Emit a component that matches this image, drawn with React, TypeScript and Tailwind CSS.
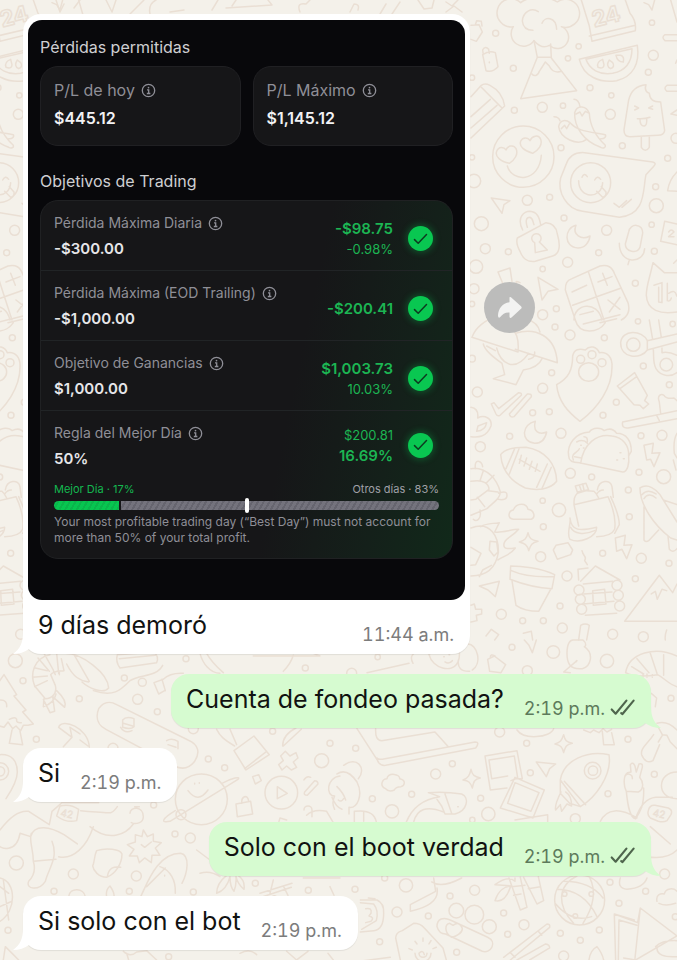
import React from "react";

/* ---------- Chat wallpaper ---------- */

type Dot = [number, number, number];

const dotsA: Dot[] = [
  [107, 100, 9], [160, 205, 9], [163, 331, 9], [247, 322, 15], [309, 317, 8], [356, 139, 8], [324, 175, 8],
  [390, 263, 9], [454, 286, 8], [451, 343, 15], [576, 68, 8], [580, 166, 15], [565, 217, 9], [303, 443, 9],
  [487, 437, 9], [623, 475, 9], [648, 415, 15], [36, 233, 8], [42, 543, 20], [36, 472, 8], [202, 601, 15],
  [269, 592, 9], [64, 671, 21], [76, 746, 15], [145, 755, 9], [312, 654, 9], [440, 691, 15], [416, 758, 9],
  [323, 787, 15], [248, 807, 8], [587, 560, 9], [589, 617, 21], [575, 674, 8], [583, 754, 9], [526, 850, 9],
  [48, 800, 20], [42, 866, 15], [36, 912, 8], [289, 926, 9], [248, 944, 15],
];

const dotsB: Dot[] = [
  [285, 21, 9], [330, 45, 15], [433, 53, 9], [275, 158, 9], [248, 205, 15], [52, 216, 15], [218, 278, 9],
  [268, 275, 9], [149, 349, 9], [303, 340, 15], [429, 286, 9], [469, 247, 9], [550, 138, 9], [628, 194, 9],
  [543, 347, 9], [606, 346, 15], [61, 380, 15], [331, 460, 15], [395, 471, 9], [537, 457, 9], [611, 470, 21],
  [505, 510, 9], [248, 542, 8], [297, 570, 20], [508, 590, 9], [250, 620, 9], [242, 710, 15], [428, 700, 9],
  [544, 715, 15], [627, 730, 9], [321, 768, 15], [526, 776, 9], [124, 883, 15], [300, 858, 9], [188, 902, 9],
  [250, 902, 9], [307, 924, 15], [458, 943, 15], [550, 950, 15], [36, 116, 10], [638, 12, 8], [534, 4, 8],
];

const dotsC: Dot[] = [
  [46, 62, 21], [69, 122, 9], [109, 298, 9], [238, 176, 9], [373, 114, 9], [427, 127, 12], [413, 178, 15],
  [472, 215, 9], [558, 56, 9], [461, 495, 9], [339, 325, 15], [580, 266, 15], [625, 357, 9], [674, 383, 9],
  [818, 274, 9], [916, 84, 9], [965, 362, 21], [990, 310, 9], [525, 582, 9], [571, 594, 15], [49, 669, 21],
  [220, 702, 15], [409, 708, 15], [162, 754, 9], [388, 754, 9], [580, 756, 9], [24, 871, 9], [766, 730, 9],
  [925, 751, 9], [506, 950, 9],
];

const dotsD: Dot[] = [
  [122, 51, 8], [525, 22, 9], [649, 36, 19], [810, 63, 20], [571, 92, 15], [44, 100, 15], [1002, 175, 9],
  [488, 276, 15], [569, 310, 9], [56, 325, 9], [296, 402, 15], [346, 371, 9], [580, 398, 9], [873, 298, 9],
  [106, 476, 9], [224, 463, 9], [165, 514, 20], [431, 475, 9], [454, 522, 20], [406, 540, 8], [715, 536, 15],
  [813, 461, 9], [952, 403, 9], [983, 702, 15], [143, 714, 9], [54, 748, 9], [207, 736, 20], [413, 751, 15],
  [339, 768, 9], [180, 816, 15], [274, 828, 9], [500, 819, 9], [561, 854, 15], [512, 883, 9], [128, 905, 9],
  [359, 937, 9], [670, 880, 9], [730, 901, 9], [787, 870, 9], [846, 790, 9], [926, 754, 9], [819, 727, 9],
  [680, 948, 15], [1015, 830, 9],
];

function Doodles({ paths, dots, children }: { paths: string[]; dots: Dot[]; children?: React.ReactNode }) {
  return (
    <>
      {dots.map(([cx, cy, r]) => (
        <circle key={`${cx}-${cy}`} cx={cx} cy={cy} r={r} />
      ))}
      {paths.map((d) => (
        <path key={d} d={d} />
      ))}
      {children}
    </>
  );
}

const pathsA = [
  // volcano
  "M160 80a42 42 0 1 1 22-72c20-18 80-22 110-2a42 42 0 1 1 12 74a34 34 0 1 1-36 56c-14 8-30 4-46-14a36 36 0 1 1-62-42z",
  "M235 35c-20-14-46 0-48 28c2 20 14 28 32 28M246 70c8-22 42-20 44 18",
  "M222 122l10 50L182 296l168-24-76-98-2-42M232 172h42M216 222c6 8 18 6 22-8l18-28 12 12c8 18 24 20 36 16",
  // calendar cake
  "M364 0l24 78 8 46 130-32c2-16-2-36-16-52L496 0M388 108l138-32",
  // watermelon
  "M358 178L532 136C540 190 520 230 470 242C420 250 370 230 358 178zM378 178l138-32c0 40-20 66-58 74c-40 6-70-12-80-42z",
  "M428 178q-20 8-14 24q18 6 18-8zM448 180q-12 18 4 26q14-6 6-18zM468 166q4 20 22 20q4-16-8-20z",
  // bottle and padlock tag
  "M68 164q20-14 38-6l8 42q-16 18-36 12zM70 164l-2-14q8-14 18-2l2 12M88 186v2M33 76l24-2 10 22-18 28-16-6M46 74l4-12 14 2 2 14",
  // pencil
  "M33 290L64 256q10-8 26 0q38 20 44 62L33 414M64 262l62 62M33 350l58-52M33 384l78-68",
  // heart eyes
  "M282 470a92 92 0 1 1-184 0a92 92 0 1 1 184 0zM142 498c14 50 96 50 102-32",
  "M148 490c-26-6-44-20-38-36c6-16 22-14 28-4c4-12 22-18 30-4c8 16-4 34-20 44zM218 460c-24-8-42-20-36-36c6-14 22-12 28-2c6-14 26-20 32-4c6 16-6 32-24 42z",
  // chillies
  "M296 380c4-24 24-20 34-12c24 26 50 26 106 36c4 8-6 14-14 12M296 380c4 34 56 60 84 38M282 350q14 0 18 12M304 386l10-10 6 10 8-14M344 338c8-26 36-20 44 2c2 40 20 70 48 96c2 8-6 10-14 6c-50-18-80-60-78-104zM342 298q14 0 18 22M348 342l12-6 6 12 10-14 12 6",
  // ice lolly
  "M506 300c8-34 30-44 52-46c-6 18 4 24 10 26c2 18 10 26 34 26l12 86c-2 12-10 14-20 14l-84 4c-14 0-18-8-18-20zM544 410v32q12 18 24 0v-34M524 318l12 6-12 6M578 318l-12 6 12 4M532 356q20 2 38-4M540 358q0 22 14 20q8-4 6-22",
  // speech bubble
  "M318 494c10-30 30-38 56-36l204 28c8 2 10 6 4 12l-24 26c-10 44 2 120-80 128l-110-18c-50-6-76-60-66-100z",
  "M452 548a60 60 0 1 1-120 0a60 60 0 1 1 120 0zM356 542c0 56 70 56 72 6M366 532q6-16 16-2M404 540q8-16 18-2M410 574l18 18q12-2 10-16l-14-16M462 610l16 12 22-20M486 622l28-24",
  // cursors
  "M94 594l56 8-18 12-6 26zM234 832l60 36-30 6-18 26z",
  // padlock
  "M172 714l86-46q30 2 34 34c10 34 8 60-14 66l-52 16c-30 4-40-14-46-30c-12-22-10-34-8-40zM188 690c-20-40 6-56 22-56c22 2 28 18 32 40M202 682c-6-20-4-30 8-30c10 4 8 14 12 22M226 758l-2-30a14 14 0 1 1 14-2l24 24z",
  // moon
  "M348 676c-12 28 16 46 42 32c-2 20-16 36-36 36c-44-2-42-60-6-68z",
  // microphone
  "M506 696c4-28 44-26 42 4l-8 42c-8 20-44 14-44-10zM478 730c0 66 74 62 76 16M508 780l-4 14",
  // card
  "M614 664l37 8M614 664l-12 60 49 10M626 696q8-12 16 0l-16 14h16",
  // calculator
  "M316 870c0-20 4-28 20-34l84-38c24-4 36 2 44 24l40 86c6 20 2 40-20 52M316 870l30 90M386 818l46 142M338 916l146-52M336 876l44-20M414 846l42-16M428 820l14 36M444 900l36 28M480 892l-32 44M342 960c0-50 70-60 84 0M360 944l40-10",
  // crying cat
  "M651 936c-50 8-90-4-92-50c0-30 10-50 20-98l34 30h38M582 856l24-8v60l-10-2v-44M622 850v52q8 4 12-8M626 880q20-14 24 8M651 780l-10 10",
  // small bits
  "M114 816l36-12 6 40M114 816l14 34M170 850q-6-10 10-2M552 8l14 6 10 16 8-30M632 0l19 66M651 104h-36q-12 8 0 18h36M651 256h-30q-12 8 0 18h30M651 330l-18 12 18 4M651 516c-20 20-26 40-28 56l28 2M651 180l-4 10",
];

const pathsB = [
  // mushroom umbrellas
  "M36 52c10-30 40-52 70-60M36 52l138 44c4-40-6-60-24-82M166 40c60-20 122 8 126 88l-126-40M200-4q34 12 40 40M70 72c4 20 30 40 56 58l8 34-34 12 68 18 22-44c24-4 48-14 56-34M80 78l26 14M110 84c10 40 50 80 96 16M206 118q20-4 18-22",
  // paw
  "M338 108c4-20 20-24 38-18c14-16 34-10 42 8c24-4 40 14 38 44c0 60-40 120-96 162c-36-28-66-60-70-110c36-20 48-44 48-86z",
  "M416 156a30 28 0 1 1-60 0a30 28 0 1 1 60 0zM374 118a12 12 0 1 1-24 0a12 12 0 1 1 24 0zM408 104a12 12 0 1 1-24 0a12 12 0 1 1 24 0zM438 128a12 12 0 1 1-24 0a12 12 0 1 1 24 0z",
  // spinner
  "M562 90l89-24M562 62l89-20M562 90c-20 30-80 26-80-22c4-40 64-40 80-6zM540 74a20 20 0 1 1-40 0a20 20 0 1 1 40 0zM568 0l10 58M596 0l8 52M580 88c2 20-2 40 8 58c16 26 48 24 63 12M606 84v14q20-4 45 8M638 134a19 19 0 1 1-38 0a19 19 0 1 1 38 0z",
  "M346 0c12 46 70 40 90 8M370 12l110-28M420 8l50-12",
  // tube and toothbrush
  "M472 198l52-40 38 68-8 16 12 10-16 14-10-10-18-2zM480 206l50-36M488 306l163-34M488 306q-4 20 16 18l147-28M590 286l8 16M598 246c-8-20 6-26 14-20c8 12 20 10 30 8l9 8M598 246l4 34",
  // double tick
  "M94 252l8-4 14 18 60-48q10 0 8 8l-64 60q-8 4-12-4zM148 282l54-60q14-2 12 8l-52 60q-12 4-14-8z",
  // cup and moon
  "M33 262q24 4 20 32c20-10 44 0 40 24c-14 36-40 34-60 32M54 318l26-10q-4 24-30 26zM226 304c-8 30 10 42 34 32c-4 20-16 34-36 34c-44-6-38-58 2-66z",
  // football
  "M122 404c10-16 40-22 76-22c60 10 90 50 92 102c-20 26-60 28-94 20c-44-20-70-50-74-100zM164 386l-26 60M178 384l-30 78M262 432l-32 70M274 442l-28 64M178 418l62 36M184 406l-6 24M200 414l-8 24M216 424l-8 24M232 432l-6 22",
  // taco
  "M326 408c-6-34 20-70 62-72c10-14 36-14 44-4c16-8 30-4 38 8c30 0 44 24 44 54l-8 14c2 20-2 48-18 48l-130-28c-16 0-32-2-32-20zM362 430c8-60 50-90 94-82c32 4 52 28 50 60M344 410l20 4M340 420c-10-20 16-24 18-34M350 366q20-10 32 4M372 350q12 0 10 16M362 376h2M370 384h2M480 398h3M470 420h3M490 416h3",
  // lightning
  "M552 376l28-6-4 30 24-2-18 42-10-22-12 2zM466 654l30-8-4 30 24-2-16 42-14-28-16 6z",
  // turtle
  "M33 446q30-6 60 20q20 20 28 50c0 20-20 30-40 50l-48 20M46 446c-4-34 20-24 22-6M116 520q30-12 24 12c-4 8-14 8-26 6M60 570c6 30-12 36-20 28M33 484c40-8 54 10 54 24l-40 30-14 2M78 490l24-24M84 512l30 4M52 532l22 28M60 482l10-30",
  // cloud and sparkle
  "M160 598c-20-4-14-26 0-28c10-24 40-22 44-2c18 2 24 24 10 30zM204 638c4 18 10 22 30 26c-18 4-22 10-28 28c-4-18-12-22-28-26c16-4 22-10 26-28z",
  // bag
  "M342 554l102-24c14 30 24 70 20 98q-10 22-54 22M342 554l14 64M342 554c0-16 0-24 10-34l28-8 22 2c6 4 10 10 14 20M346 498l32-8 8 20M346 498l6 18 30-6M358 496l6 16M368 492l4 18M412 510c4-30 40-34 44-10l4 32M410 522q8-12 20-12M452 530c14 30 26 60 26 84l-14 26M330 594c4 40 30 40 80 28c0 30-50 50-80 36c-12-18 4-44 0-64zM332 622c10 20 40 24 72 10",
  // shuttle
  "M540 504c24-16 50 6 60 20l51 82M540 504c0 50 40 110 92 150l19 6M546 524c14-16 30-10 42-2M552 536c10-16 24-12 36-2M552 560v100q6 8 14 2l30-32M610 540l41 14M624 648l4 40q10 12 23-2",
  // comet ball
  "M33 624c60-24 84 30 82 74c-10 60-50 70-82 70M62 620c20-12 34-8 56-12l-14 28c20 4 50-8 72-8c-20 24-44 28-44 44c-4 18 20 14 34 12c-14 20-34 24-52 36M33 682l30 18-16 34-14 2M90 664l20 2 4 30-12 12-14-18zM58 770l10-20 26-14",
  // ribbon, steam, pot
  "M280 690l8-14 36-8 14 22-6 14-40 14zM366 692c4 20 16 16 8 30l8 12M152 738c30 0 90 6 132 26l-8 42c-50-2-90-14-126-28zM154 752c40 18 80 20 126 18M156 782l12 74c20 14 44 18 68 18l36-66",
  // cabin
  "M356 780l-2-32 30-4M362 784l44-46 74 42M370 792l88-8M372 822l84-6M370 852l92-8M376 886l94-6M398 812l36-4 4 44-38 4zM372 810a15 15 0 1 1-30 0a15 15 0 1 1 30 0zM376 838a15 15 0 1 1-30 0a15 15 0 1 1 30 0zM380 868a15 15 0 1 1-30 0a15 15 0 1 1 30 0zM486 796a15 15 0 1 1-30 0a15 15 0 1 1 30 0zM490 826a15 15 0 1 1-30 0a15 15 0 1 1 30 0zM494 858a15 15 0 1 1-30 0a15 15 0 1 1 30 0z",
  // mountain
  "M651 904H494L598 766l40 52 13-26M574 822l12-8 6 24 14-30 14 4",
  "M58 798l60-14-12 46-22-20zM33 856l10-4 4 16 18 0v14l-16 4 2 16-18 4M78 948l16-20 22 16-12 16M190 940l24-6 4 26M356 960l6-44q14-8 26 0l-8 44M620 930q-6 16-4 30M651 340q-12 20-8 60l8 14M640 420l8 30",
];

const pathsC = [
  // prawn
  "M150 44c-50 10-60 60-46 94l32 38c20 0 36-16 30-40l-14-32c10-14 30-10 40-12l-8-36M106 84l36 8M98 112l44-4M104 140l38-18M114 54l34 40M132 40l28 50M170 40l6 60M132 176l-2 24q32-10 38-38M130 178l20 40 14-4-6-44 36 32q8-20-24-50M166 104l-6-12M178 104v-10",
  "M196 40c50 0 128 60 130 104c-16 20-60 0-80-18M200 72c20 40 40 50 66 54M220 40l48 84M280 152c60 20 80 0 110-30c30-20 80-10 98-46M352 44l110-8q16 14 8 32l-110 16q-14-20-8-40M358 56l108-10M462 128l28-10q20-20 60-18M462 128l14 34 18-10M486 118l10 34",
  // tree
  "M-6 130l18-26 38 60-8 4 36 42-10 6 32 36-16 4-14 0-8 16-14-14-10 8-14-20-12 16-20-6M2 180q20 0 18 20M28 238q18-10 22 0-2 12 14 10M36 270l-8 40 40 4-8-40",
  // skateboard
  "M296 206c14-20 34-24 54-12l214 106c34 14 36 40 20 64c-20 26-40 24-60 14L318 268c-20-10-34-30-22-62zM368 240q10-12 34-4v24q-10 10-34 2zM362 262q12 20 34 10M370 250l28 8M500 302q14-10 34 2v22M504 314l24 8",
  // mushroom
  "M176 262c8-30 90 0 92 60M176 262l40 30-6-30 30 20M216 292l-26 28M240 300l24 18",
  // target
  "M0 344c36-2 52 20 52 52c0 20-14 50-34 80M0 368a26 26 0 0 1 0 52M0 380a14 14 0 0 1 0 28",
  // planet
  "M682 478a78 76 0 1 1-156 0a78 76 0 1 1 156 0zM666 430c30-16 58-22 48-12L510 544c-30 6-24-8 16-32M558 524a15 15 0 1 1-30 0a15 15 0 1 1 30 0zM564 452q30 40 60-2M584 430v2M598 428v2",
  // play button
  "M893 458a49 49 0 1 1-98 0a49 49 0 1 1 98 0zM832 440l30 20-30 16z",
  // crossed plaster and book
  "M842 348l14-14 14 14 18-10 6 16-14 12 10 16-16 8-14-12-14 12-10-16 14-12zM650 268c10 20 20 30 54 50M690 268l20 46M702 332l60-44 46 56-70 46zM734 386l66-52M848 318c0-20 12-40 40-54M850 318l54-50",
  // small padlock, cube and plaster
  "M708 492l44-8 6 38-46 8zM726 490c-4-20 18-30 20-6M758 410l18-6 8 18-18 10zM912 420q8-14 20-8M914 456l30-34q10 0 10 10l-32 34q-12 0-8-10M912 510a12 12 0 1 1 24 0v20M920 526q20-20 60-12l20 34M860 540l-20-6-4 14",
  // lady
  "M1020 408c-40 4-44 60-16 60q-10 20 0 40M996 472q12 30 30 36",
  // dancer
  "M0 570c30-40 60-60 86-56l62 40 8-40 30-26h110M60 580l32 10M60 580c-10 60-60 50-70 30M92 590c10-40 60-30 100-6l40 28M156 604c20 50-10 80-20 120c-20 30-60 24-50 0c20-20 20-40 14-60c0-40-14-60-6-84M100 664l68-6M280 560c-20 60-60 100-104 90M270 560c60 50 110 20 130-8M352 500c-20 26-10 20-110 12M390 520c0-20 40-24 40 10c0 20-24 24-36 18M404 500l14 0",
  "M180 498q30-8 56 10l-6 34q-30 8-60-14z",
  // star badge
  "M430 570l12 20 18-8 0 22 24 4-18 16 14 22-24 0-2 22-20-14-16 14-6-20-24 0 14-20-20-14 24-8 0-22 20 6zM424 614l10 8 20-16",
  // toast and surfboard
  "M290 632c30-10 70-4 76 10c0 30-20 60-46 70c-24 0-40-20-42-34c6-10 4-30 12-46zM322 710c4-26 20-32 40-28M422 770c20-40 50-130 120-130c30 6 20 60 4 90M480 680c30 10 48 40 46 80M440 740l56-56M494 706v2",
  // leaf
  "M590 630l40 30M600 700q30-10 60 10M680 706c-20 16-30 34-30 54q30-10 40-50q0 30 12 44q8-20 6-44q6 24 24 38q4-26-16-40M780 760l96-30M820 720l-10 40 20 10M850 738l14 28M784 772l90-30",
  // ball, cloud and flame
  "M0 714c50 10 50 100 0 130M0 740l26 20M0 800l36-16M10 720l16 120M206 770c4-30 46-26 50 0M320 770q-4-20 10-32q14 20 12 32",
  // bottom bits
  "M10 960l6-40 24 24 16 16M370 934q20 20 40 2l30-4 30 28M380 940l6 20M720 940q30-16 50 4M600 40c8 30 30 60 60 60M620 40c14 26 30 40 50 58M880 46q-8 26-30 48M760 48h200l-20-8M910 714h110M860 934l30 26 34-26M990 740l12 26M984 940l16 20",
];

const pathsD = [
  "M90 98l126-28M228 70c-20-34 30-50 50-26M276 44c10 40 70 60 88 20c6-20 4-30 0-40M320 50h2M336 44h2M324 66q12 8 22-4M392 12c30 0 44 60 14 78M364 60q-4 36 34 34M452 58l20-10 34 26-14 24-34-4zM460 52q0-12 14-4M562 0l14 16 10 22 12-38M700 98l-20-2 40-34M690 40c0-30 10-40 18-40h30c12 10 8 20 4 20c30 20 20 60-6 66c-40 4-46-20-46-46zM718 62v3",
  // prawn on the right
  "M866 98c10-60 90-80 154-50M884 80l36 22M900 56l36 42M940 40l20 60M980 44l0 62M866 98q30 16 96 6c20 10 34 30 58 36M918 102v10M930 102v10M946 104v8M943 160l16 14-4 26",
  // laptop
  "M60 266l62 96q6 16 24 14l270-52q14-18-2-18l-270 50q-20 4-24-2M116 266q-2 36 18 36l160-26M294 276l40 44",
  // cloud and sparkles
  "M146 446c-20-8-10-30 4-30c4-20 40-14 38 0c20 4 16 20 4 24q-16 0-20 10q-16 8-26-4zM402 388c4 18 10 22 28 26c-18 4-20 10-24 30c-6-18-12-22-28-24c16-6 20-14 24-32zM680 284c4 18 8 22 26 26c-18 4-20 8-26 28c-4-18-10-22-26-26c16-4 20-10 26-28z",
  // photos
  "M444 348l96-16 16 84-22 0M444 348l16 102 50-6M456 360l76-12 10 66-20 8M456 360l8 56 48-8M534 412l88 38-34 84-98-30zM534 428l72 30-24 56-70-24zM534 540l98-16 0 26",
  // cursor and rocket
  "M598 366l58 6-18 14-10 24zM670 420c10-60 80-90 146-76c10 60-40 130-86 156zM670 420l0 40 28 30 32 10M792 392a25 25 0 1 1-50 0a25 25 0 1 1 50 0zM782 392a14 14 0 1 1-28 0a14 14 0 1 1 28 0zM682 424l64 70M672 456c-10 20-20 40-16 54l14-16 4 20 16-22 14 6q0-30-18-42",
  "M540 270c20 30 100 24 110-4M740 270l20 8 10-8 16 8 12-12 12 10 14-8M796 274l4 40 32 0-8-36",
  // whale
  "M208 546c20-50 60-70 100-76l-34-12q50-4 100 4c24 10 18 50-20 60l-30 0-10-24-14-20M230 546c10-40 40-50 90-30M324 462l20 58M362 500h2",
  // grandma
  "M0 402q30-20 60 24c20 40 0 80-24 76l0 20M20 376c40-30 70 10 44 40M0 440q20 20 26 40M4 480q8 8 16-4M52 514c30-4 60 0 66 32M52 514v32M80 516v28",
  // peace hand and astronaut
  "M868 454c-10-20-8-50 4-56l10-2-2-22q8-10 14 4l4 18 8-24q12-4 10 10l-8 30c16 20 8 40-4 44zM864 408a12 12 0 0 1 22 8M868 454c4 40 10 80 28 82c14-20 26-40 24-92M896 536q20-60 60-64h50M1020 396c-60 0-64 80 0 80M934 512q4-18 20-16l40 8q14 6 8 20l-12 18q-10 6-26 2l-24-10q-10-8-6-22zM790 544c20-40 60-40 110-10M940 560l60 52M930 650q60 10 90-20",
  // mushroom on the right
  "M960 250q30-10 60 20M962 258l14 26 14 2 10 20 20 20M950 284c-20 30-40 40-36 60q12 30 34 18l20-48M976 286l-12 20",
  // bamboo
  "M474 782c10-30 30-44 50-44l-50-4q40-30 60-10v-10M516 714l34 96 20-8-20-90M560 712l40 80 20-10-16-72M524 740l40-4M530 766l22-4M574 746l36-6M474 782q30 8 46-40",
  // scarf and band
  "M290 714l6 40-76 40v20q90-20 80-70M284 726q30 20 90-12M850 714q-10 30 20 34q50-4 60-34",
  // globe
  "M803 780a75 75 0 1 1-150 0a75 75 0 1 1 150 0zM680 724q80 0 118 50M654 790q50 60 110 40M720 708c-60 30-60 90-10 142M758 712q30 60-20 138M660 748q80 0 120 82M690 762a7 7 0 1 1-14 0a7 7 0 1 1 14 0zM770 762a7 7 0 1 1-14 0a7 7 0 1 1 14 0zM722 828a7 7 0 1 1-14 0a7 7 0 1 1 14 0z",
  // camera and pills
  "M70 780l50 0q22 10 20 40q0 50-30 52l-40 4M70 788l40 4q16 20 8 50l-44 26M86 806q20-4 16 14l-6 8q18 4 6 16l-16 4M94 774l20 2M380 812a22 22 0 1 1-44 0a22 22 0 1 1 44 0zM440 824a28 28 0 1 1-56 0a28 28 0 1 1 56 0zM478 860a21 21 0 1 1-42 0a21 21 0 1 1 42 0z",
  "M300 860c0-24 20-30 40-20l112 52c30 14 10 50-16 42l-110-52q-20 0-26-22zM344 892c-24-14-20-40-6-42l10 6q20-14 28 10c0 14-20 24-32 26z",
  // phone with sun
  "M176 894q0-16 20-22l34-22q20 0 32 14l56 60 10 36M176 894l14 66M282 940a24 24 0 1 1-48 0M270 940a12 12 0 1 1-24 0q12-12 16 4M258 904v-10M276 912l6-10M240 912l-6-8M288 926l10-4M226 930l-10-4",
  // chopsticks
  "M500 952l130-100q10 0 8 10l-118 98M540 960l86-48q12 2 12 12l-60 36M520 938l14 14M604 874l10 12",
  // books
  "M832 822l60 18M832 822l4 138M846 840l-2 120M832 822l70 26 8-44 110 84-124 72-36-6M846 840l54 16M910 804l-16 152M956 920q20-20 64-18M960 924q0 30 60 26M960 784c-4-20 10-24 22-22c4-20 30-18 38-8M966 790q20 10 50 0M756 960q4-30 24-40q16 20 20 40M50 966l110-14",
];

function Wallpaper() {
  return (
    <svg
      aria-hidden="true"
      className="absolute inset-0 size-full"
      viewBox="0 0 677 960"
      preserveAspectRatio="xMinYMin slice"
      fill="none"
      stroke="#eadfd4"
      strokeWidth="4.5"
      strokeLinecap="round"
      strokeLinejoin="round"
    >
      <defs>
        <g id="column">
          <g transform="translate(460 0) scale(0.3333)">
            <Doodles paths={pathsA} dots={dotsA}>
              <text x="396" y="72" fontSize="66" fontWeight="700" transform="rotate(-14 440 50)" className="font-['Inter',sans-serif]">
                24
              </text>
            </Doodles>
          </g>
          <g transform="translate(460 320) scale(0.3333)">
            <Doodles paths={pathsB} dots={dotsB} />
          </g>
        </g>
      </defs>
      <use href="#column" />
      <use href="#column" x="-592" />
      <path
        strokeWidth="1.5"
        d="M56 0l4 12 4-8M80 0l-6 8M106 0l6 12 4-12M130 14l14-14M150 14q-2-10 6-14M170 12l14-2M212 10l6-10M226 8l46-3-4-5M236 0l-4 6M300 12q-4-10 6-8l4-4M350 12l4-8q6 0 4 6M380 14l6-10M392 14l8-12M418 0l6 9 8-1 2-8M446 2l6 4 6-6M446 12l8-6 8 6"
      />
      <g transform="translate(0 640) scale(0.3333)">
        <Doodles paths={pathsC} dots={dotsC}>
          <text x="182" y="532" fontSize="30" strokeWidth="2" transform="rotate(12 200 520)" className="font-['Inter',sans-serif]">
            42
          </text>
        </Doodles>
      </g>
      <g transform="translate(337 640) scale(0.3333)">
        <Doodles paths={pathsD} dots={dotsD}>
          <text x="948" y="532" fontSize="30" strokeWidth="2" transform="rotate(12 966 520)" className="font-['Inter',sans-serif]">
            42
          </text>
        </Doodles>
      </g>
    </svg>
  );
}

/* ---------- Icons ---------- */

function InfoIcon() {
  return (
    <svg aria-hidden="true" viewBox="0 0 16 16" className="size-[15px] shrink-0" fill="none" stroke="currentColor" strokeWidth="1.4">
      <circle cx="8" cy="8" r="6.6" />
      <path d="M6.4 7.3H8.2V11.2M6.2 11.2H10" />
      <circle cx="8" cy="4.9" r="0.9" fill="currentColor" stroke="none" />
    </svg>
  );
}

function CheckBadge() {
  return (
    <span className="flex size-[25px] shrink-0 items-center justify-center rounded-full bg-[#09c751] shadow-[0_0_6px_2px_rgba(9,199,81,0.28)]">
      <svg role="img" aria-label="Cumplido" viewBox="0 0 15 12" className="h-3 w-[15px]" fill="none" stroke="#0d3a20" strokeWidth="1.5" strokeLinecap="round" strokeLinejoin="round">
        <path d="M1.5 6.6L5.2 10.2L13.5 1.6" />
      </svg>
    </span>
  );
}

function DoubleTick() {
  return (
    <svg role="img" aria-label="Entregado" viewBox="822 178 76 52" className="mb-[3px] ml-[5px] h-[17px] w-[25px] shrink-0" fill="none" stroke="#4f654d" strokeWidth="6.5" strokeLinecap="round" strokeLinejoin="round">
      <path d="M827 210L839 223L872 183M856 221L860 224L894 183" />
    </svg>
  );
}

function Tail({ side }: { side: "left" | "right" }) {
  return (
    <svg
      aria-hidden="true"
      viewBox="0 0 20 22"
      className={
        side === "left"
          ? "absolute bottom-0 -left-[10px] h-[22px] w-5 fill-white"
          : "absolute -right-[10px] bottom-0 h-[22px] w-5 -scale-x-100 fill-[#d6fbd0]"
      }
    >
      <path d="M10 0C10 11 7 17 0 22C6 22 12 20 16 17L19 10Z" />
    </svg>
  );
}

/* ---------- Messages ---------- */

function MessageLine({ text, time, sent = false }: { text: string; time: string; sent?: boolean }) {
  return (
    <div className="flex items-end justify-between gap-5 pt-[9px] pb-[9px]">
      <p className="mb-1 text-[25px] leading-8 text-[#111211]">{text}</p>
      <div className="flex items-end">
        <time
          className={
            sent
              ? "text-[18px] leading-5 text-[#5d7a5b] tabular-nums"
              : "text-[18px] leading-5 text-[#7c7c7c] tabular-nums"
          }
        >
          {time}
        </time>
        {sent && <DoubleTick />}
      </div>
    </div>
  );
}

function Received({ text, time }: { text: string; time: string }) {
  return (
    <div className="relative self-start rounded-[18px] bg-white pr-4 pl-[15px] shadow-[0_1px_1px_rgba(0,0,0,0.08)]">
      <Tail side="left" />
      <MessageLine text={text} time={time} />
    </div>
  );
}

function Sent({ text, time }: { text: string; time: string }) {
  return (
    <div className="relative self-end rounded-[18px] bg-[#d6fbd0] pr-4 pl-[15px] shadow-[0_1px_1px_rgba(0,0,0,0.08)]">
      <Tail side="right" />
      <MessageLine text={text} time={time} sent />
    </div>
  );
}

/* ---------- Trading card ---------- */

function LimitBox({ label, value }: { label: string; value: string }) {
  return (
    <div className="h-20 rounded-[18px] border border-[#202023] bg-[#161618] px-[13px] pt-[11px]">
      <div className="flex items-center gap-1.5 text-[16px] leading-6 text-[#8f8f97]">
        {label}
        <InfoIcon />
      </div>
      <div className="mt-1 text-[16px] leading-6 font-semibold text-[#f2f2f4]">{value}</div>
    </div>
  );
}

interface GoalProps {
  label: string;
  value: string;
  compact?: boolean;
  children: React.ReactNode;
}

function Goal({ label, value, compact = false, children }: GoalProps) {
  return (
    <div className={compact ? "flex h-[62px] justify-between pr-[19px] pl-[13px]" : "flex h-[70px] justify-between pr-[19px] pl-[13px]"}>
      <div className="pt-3">
        <div className="flex items-center gap-1.5 text-[14px] leading-5 text-[#8f8f97]">
          {label}
          <InfoIcon />
        </div>
        <div className="mt-1 text-[15px] leading-6 font-semibold text-[#e6e6e9]">{value}</div>
      </div>
      <div className="flex items-center gap-[15px] pt-1.5">
        <div className="text-right text-[#1cb553]">{children}</div>
        <CheckBadge />
      </div>
    </div>
  );
}

function Strong({ children }: { children: React.ReactNode }) {
  return <div className="text-[15px] leading-[21px] font-semibold">{children}</div>;
}

function Soft({ children }: { children: React.ReactNode }) {
  return <div className="text-[13px] leading-5">{children}</div>;
}

function TradingCard() {
  return (
    <section className="h-[580px] rounded-[14px] bg-[#08080b] px-3 pt-[15px] font-['Inter','Liberation_Sans',sans-serif]">
      <h2 className="text-[16px] leading-6 text-[#cfcfd2]">Pérdidas permitidas</h2>
      <div className="mt-[7px] grid grid-cols-2 gap-3">
        <LimitBox label="P/L de hoy" value="$445.12" />
        <LimitBox label="P/L Máximo" value="$1,145.12" />
      </div>
      <h2 className="mt-[23px] text-[16px] leading-6 text-[#cfcfd2]">Objetivos de Trading</h2>
      <div className="mt-[7px] divide-y divide-[#212426] rounded-[18px] border border-[#202123] bg-[linear-gradient(102deg,#161618_60%,#14201a_82%,#11291a_100%)]">
        <Goal label="Pérdida Máxima Diaria" value="-$300.00">
          <Strong>-$98.75</Strong>
          <Soft>-0.98%</Soft>
        </Goal>
        <Goal label="Pérdida Máxima (EOD Trailing)" value="-$1,000.00">
          <Strong>-$200.41</Strong>
        </Goal>
        <Goal label="Objetivo de Ganancias" value="$1,000.00">
          <Strong>$1,003.73</Strong>
          <Soft>10.03%</Soft>
        </Goal>
        <div className="pb-3">
          <Goal label="Regla del Mejor Día" value="50%" compact>
            <Soft>$200.81</Soft>
            <Strong>16.69%</Strong>
          </Goal>
          <div className="px-[13px] pt-2">
            <div className="flex justify-between text-[11px] leading-4 text-[#a0a0a8]">
              <span className="text-[#14b850]">Mejor Día · 17%</span>
              <span>Otros días · 83%</span>
            </div>
            <div className="relative mt-1 flex h-[9px] gap-0.5">
              <div className="w-[17%] rounded-l-full bg-[repeating-linear-gradient(120deg,#07c650_0px,#07c650_3px,#0ab54b_3px,#0ab54b_5px)]" />
              <div className="flex-1 rounded-r-full bg-[repeating-linear-gradient(120deg,#74737d_0px,#74737d_3px,#66656f_3px,#66656f_5px)]" />
              <span className="absolute -top-[3px] left-1/2 h-[15px] w-1 -translate-x-1/2 rounded-full bg-white" />
            </div>
            <p className="mt-1 text-[12px] leading-4 text-[#8f8f97]">
              Your most profitable trading day (“Best Day”) must not account for more than 50% of your total profit.
            </p>
          </div>
        </div>
      </div>
    </section>
  );
}

/* ---------- Conversation ---------- */

export default function App() {
  return (
    <main className="relative min-h-screen overflow-hidden bg-[#f4f1ea] font-['Inter','Liberation_Sans',sans-serif]">
      <Wallpaper />
      <div className="relative flex flex-col gap-5 pt-[14px] pr-[26px] pb-[10px] pl-[23px]">
        <div className="flex items-center">
          <article className="relative w-[447px] rounded-[18px] bg-white shadow-[0_1px_1px_rgba(0,0,0,0.08)]">
            <Tail side="left" />
            <div className="px-[5px] pt-1.5">
              <TradingCard />
            </div>
            <div className="pr-4 pl-[15px]">
              <MessageLine text="9 días demoró" time="11:44 a.m." />
            </div>
          </article>
          <div className="pb-[54px] pl-[14px]">
            <button type="button" aria-label="Reenviar" className="flex size-[51px] items-center justify-center rounded-full bg-[#bcbcbb]">
              <svg aria-hidden="true" viewBox="740 104 76 68" className="h-[23px] w-[25px] fill-[#f3f3f2]">
                <path d="M778 107Q781 105 785 109L813 134Q817 138 813 142L785 168Q779 172 778 166V153C765 152 757 157 750 167Q744 172 743 163C744 141 756 125 778 122Z" />
              </svg>
            </button>
          </div>
        </div>
        <Sent text="Cuenta de fondeo pasada?" time="2:19 p.m." />
        <Received text="Si" time="2:19 p.m." />
        <Sent text="Solo con el boot verdad" time="2:19 p.m." />
        <Received text="Si solo con el bot" time="2:19 p.m." />
      </div>
    </main>
  );
}
